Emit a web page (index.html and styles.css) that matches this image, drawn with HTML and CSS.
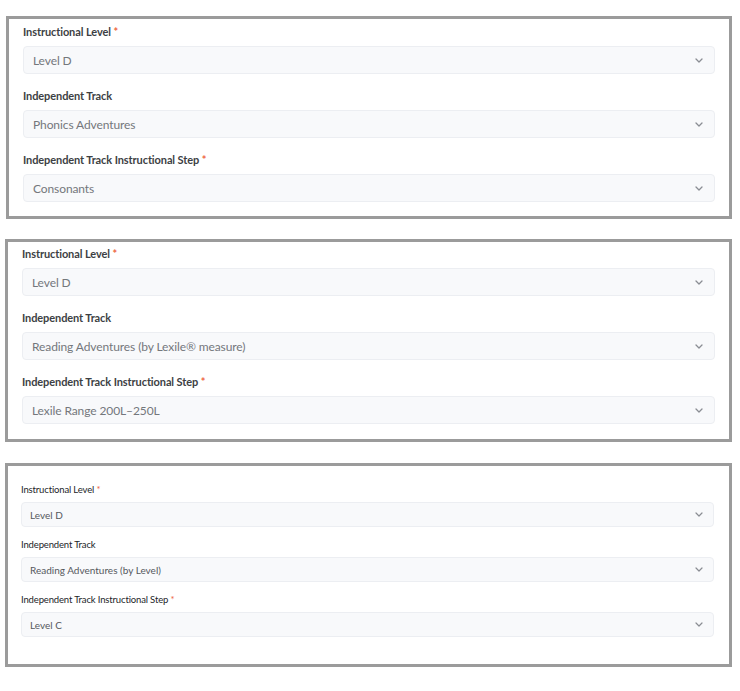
FILE: index.html
```html
<!DOCTYPE html>
<html>

<head>
    <title>Independent Track Settings</title>
    <link rel="stylesheet" href="styles.css">
</head>

<body>
    <!-- Phonics track -->
    <div class="panel panel-first">
        <div class="field">
            <label class="field-label">Instructional Level <span class="req">*</span></label>
            <div class="select">
                <span class="select-value">Level D</span>
                <svg class="chevron" width="8" height="5" viewBox="0 0 8 5"><path d="M1 1l3 3 3-3" fill="none" stroke="#8a8d93" stroke-width="1.3" stroke-linecap="round" stroke-linejoin="round"/></svg>
            </div>
        </div>
        <div class="field">
            <label class="field-label">Independent Track</label>
            <div class="select">
                <span class="select-value">Phonics Adventures</span>
                <svg class="chevron" width="8" height="5" viewBox="0 0 8 5"><path d="M1 1l3 3 3-3" fill="none" stroke="#8a8d93" stroke-width="1.3" stroke-linecap="round" stroke-linejoin="round"/></svg>
            </div>
        </div>
        <div class="field">
            <label class="field-label">Independent Track Instructional Step <span class="req">*</span></label>
            <div class="select">
                <span class="select-value">Consonants</span>
                <svg class="chevron" width="8" height="5" viewBox="0 0 8 5"><path d="M1 1l3 3 3-3" fill="none" stroke="#8a8d93" stroke-width="1.3" stroke-linecap="round" stroke-linejoin="round"/></svg>
            </div>
        </div>
    </div>

    <!-- Lexile track -->
    <div class="panel panel-second">
        <div class="field">
            <label class="field-label">Instructional Level <span class="req">*</span></label>
            <div class="select">
                <span class="select-value">Level D</span>
                <svg class="chevron" width="8" height="5" viewBox="0 0 8 5"><path d="M1 1l3 3 3-3" fill="none" stroke="#8a8d93" stroke-width="1.3" stroke-linecap="round" stroke-linejoin="round"/></svg>
            </div>
        </div>
        <div class="field">
            <label class="field-label">Independent Track</label>
            <div class="select">
                <span class="select-value">Reading Adventures (by Lexile® measure)</span>
                <svg class="chevron" width="8" height="5" viewBox="0 0 8 5"><path d="M1 1l3 3 3-3" fill="none" stroke="#8a8d93" stroke-width="1.3" stroke-linecap="round" stroke-linejoin="round"/></svg>
            </div>
        </div>
        <div class="field">
            <label class="field-label">Independent Track Instructional Step <span class="req">*</span></label>
            <div class="select">
                <span class="select-value">Lexile Range 200L–250L</span>
                <svg class="chevron" width="8" height="5" viewBox="0 0 8 5"><path d="M1 1l3 3 3-3" fill="none" stroke="#8a8d93" stroke-width="1.3" stroke-linecap="round" stroke-linejoin="round"/></svg>
            </div>
        </div>
    </div>

    <!-- Level track (compact) -->
    <div class="panel panel-compact">
        <div class="field">
            <label class="field-label">Instructional Level <span class="req">*</span></label>
            <div class="select">
                <span class="select-value">Level D</span>
                <svg class="chevron" width="8" height="5" viewBox="0 0 8 5"><path d="M1 1l3 3 3-3" fill="none" stroke="#8a8d93" stroke-width="1.2" stroke-linecap="round" stroke-linejoin="round"/></svg>
            </div>
        </div>
        <div class="field">
            <label class="field-label">Independent Track</label>
            <div class="select">
                <span class="select-value">Reading Adventures (by Level)</span>
                <svg class="chevron" width="8" height="5" viewBox="0 0 8 5"><path d="M1 1l3 3 3-3" fill="none" stroke="#8a8d93" stroke-width="1.2" stroke-linecap="round" stroke-linejoin="round"/></svg>
            </div>
        </div>
        <div class="field">
            <label class="field-label">Independent Track Instructional Step <span class="req">*</span></label>
            <div class="select">
                <span class="select-value">Level C</span>
                <svg class="chevron" width="8" height="5" viewBox="0 0 8 5"><path d="M1 1l3 3 3-3" fill="none" stroke="#8a8d93" stroke-width="1.2" stroke-linecap="round" stroke-linejoin="round"/></svg>
            </div>
        </div>
    </div>
</body>

</html>
```

FILE: styles.css
```css
body {
    margin: 0;
    padding: 16px 8px 0 5px;
    background-color: #ffffff;
    font-family: Lato, "Open Sans", sans-serif;
    display: flex;
    flex-direction: column;
    gap: 20px;
}

.panel {
    border: 3px solid #9b9b9b;
    background-color: #ffffff;
    padding: 5px 14px 14px 14px;
    display: flex;
    flex-direction: column;
    gap: 15px;
}

.panel-first {
    margin-left: 1px;
    padding-top: 6px;
    padding-bottom: 14px;
}

.panel-second {
    padding-bottom: 15px;
}

.field {
    display: flex;
    flex-direction: column;
    gap: 7px;
}

.field-label {
    font-size: 11px;
    line-height: 14px;
    font-weight: 700;
    color: #3d3f44;
    letter-spacing: -0.1px;
}

.req {
    color: #ee6644;
}

.select {
    display: flex;
    align-items: center;
    justify-content: space-between;
    height: 28px;
    box-sizing: border-box;
    padding: 0 11px 0 9px;
    background-color: #f8f9fb;
    border: 1px solid #eceef2;
    border-radius: 4px;
}

.select-value {
    font-size: 12px;
    color: #74777c;
    letter-spacing: -0.1px;
}

.chevron {
    flex-shrink: 0;
}

/* smaller variant of the same form */
.panel-compact {
    margin-top: 1px;
    padding: 18px 15px 27px 13px;
    gap: 12px;
}

.panel-compact .field {
    gap: 6px;
}

.panel-compact .field-label {
    font-size: 9.5px;
    line-height: 12px;
    font-weight: 400;
    color: #222428;
    letter-spacing: -0.15px;
}

.panel-compact .select {
    height: 25px;
    padding: 0 10px 0 8px;
}

.panel-compact .select-value {
    font-size: 10px;
    color: #55585d;
    letter-spacing: 0;
}
```
